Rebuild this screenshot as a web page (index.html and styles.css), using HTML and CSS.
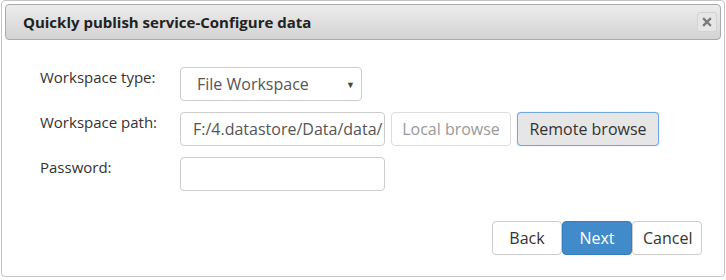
FILE: index.html
```html
<!DOCTYPE html>
<html>
<head>
<meta charset="utf-8">
<link rel="stylesheet" href="styles.css">
</head>
<body>
<div class="dialog">
  <div class="titlebar">
    <span class="title">Quickly publish service-Configure data</span>
    <button class="close" aria-label="close">
      <svg width="10" height="10" viewBox="0 0 10 10"><path d="M2 2 L8 8 M8 2 L2 8" stroke="#7a7a7a" stroke-width="2.4" stroke-linecap="square"/></svg>
    </button>
  </div>
  <div class="content">
    <div class="form">
      <label class="label">Workspace type:</label>
      <div class="field">
        <div class="select"><span>File Workspace</span><span class="arrow">&#9660;</span></div>
      </div>
      <label class="label">Workspace path:</label>
      <div class="field">
        <div class="input"><span class="value">F:/4.datastore/Data/data/</span></div>
        <button class="btn btn-light">Local browse</button>
        <button class="btn btn-focus">Remote browse</button>
      </div>
      <label class="label">Password:</label>
      <div class="field">
        <div class="input"></div>
      </div>
    </div>
    <div class="footer">
      <button class="btn btn-default">Back</button>
      <button class="btn btn-primary">Next</button>
      <button class="btn btn-default">Cancel</button>
    </div>
  </div>
</div>
</body>
</html>
```
FILE: styles.css
```css
html, body {
  margin: 0;
  padding: 0;
  background: #ffffff;
}
body {
  font-family: "Open Sans", "Liberation Sans", sans-serif;
  font-size: 15px;
  color: #333;
}
.dialog {
  margin-left: 1px;
  width: 724px;
  height: 277px;
  box-sizing: border-box;
  border: 1px solid #c5c5c5;
  border-radius: 4px;
  padding: 3px;
  display: flex;
  flex-direction: column;
  box-shadow: 0 1px 1px rgba(0,0,0,0.08);
}
.titlebar {
  height: 36px;
  box-sizing: border-box;
  border: 1px solid #aaa;
  border-radius: 4px;
  background: linear-gradient(#ececec, #d3d3d3);
  display: flex;
  align-items: center;
  justify-content: space-between;
  padding: 0 3px 0 17px;
}
.title {
  font-weight: bold;
  font-size: 15px;
  color: #222;
}
.close {
  width: 20px;
  height: 20px;
  border: 1px solid #d3d3d3;
  border-radius: 3px;
  background: #e6e6e6;
  padding: 0;
  display: flex;
  align-items: center;
  justify-content: center;
}
.content {
  flex: 1;
  display: flex;
  flex-direction: column;
  padding: 27px 19px 18px 35px;
}
.form {
  display: grid;
  grid-template-columns: 140px 1fr;
  row-gap: 11px;
}
.label {
  line-height: 20px;
  margin-top: 0;
}
.field {
  display: flex;
  gap: 6px;
  align-items: center;
}
.select, .input {
  height: 34px;
  box-sizing: border-box;
  border: 1px solid #ccc;
  border-radius: 4px;
  display: flex;
  align-items: center;
  color: #555;
  font-size: 16px;
  overflow: hidden;
  white-space: nowrap;
}
.select {
  width: 182px;
  padding: 0 6px 0 16px;
  justify-content: space-between;
}
.arrow {
  font-size: 9px;
  color: #444;
}
.input {
  width: 205px;
  padding: 0 12px;
}
.btn {
  height: 34px;
  box-sizing: border-box;
  border: 1px solid #ccc;
  border-radius: 4px;
  background: #fff;
  font-family: inherit;
  font-size: 16px;
  color: #333;
  padding: 0 10px;
  cursor: pointer;
}
.btn-light {
  color: #999;
  border-color: #ddd;
  width: 120px;
}
.btn-focus {
  background: #e6e6e6;
  border-color: #6fa7e6;
  box-shadow: 0 0 1px #8ab8ee;
  width: 142px;
}
.footer {
  margin-top: auto;
  display: flex;
  justify-content: flex-end;
}
.footer .btn {
  width: 70px;
}
.btn-primary {
  background: #428bca;
  border-color: #357ebd;
  color: #fff;
}
```
